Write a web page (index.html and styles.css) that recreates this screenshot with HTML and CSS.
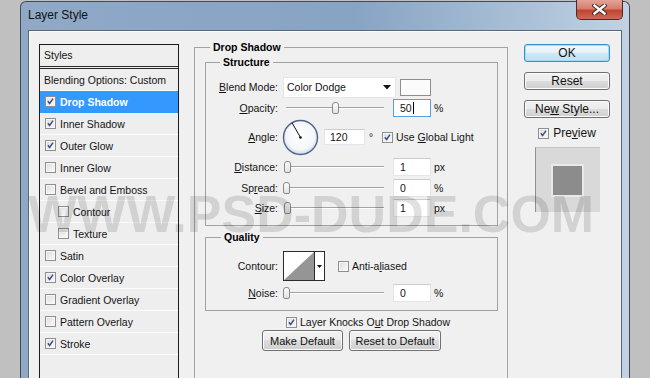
FILE: index.html
```html
<!DOCTYPE html>
<html lang="en">
<head>
    <meta charset="UTF-8">
    <title>Layer Style</title>
    <link rel="stylesheet" href="styles.css">
</head>
<body>
    <div class="window">
        <div class="titlebar">
            <span class="title">Layer Style</span>
            <span class="close">
                <svg width="15" height="11" viewBox="0 0 15 11">
                    <path d="M2.5 1.5 L12.5 9.5 M12.5 1.5 L2.5 9.5" stroke="#3a2020" stroke-width="4.2" stroke-linecap="square"/>
                    <path d="M2.5 1.5 L12.5 9.5 M12.5 1.5 L2.5 9.5" stroke="#fff" stroke-width="2.4" stroke-linecap="square"/>
                </svg>
            </span>
        </div>
        <div class="client">
            <div class="styles-list">
                <div class="list-head">Styles</div>
                <div class="list-row blending">Blending Options: Custom</div>
                <div class="list-row selected"><span class="check"><svg viewBox="0 0 11 11"><path d="M2.3 5.2 L4.4 7.9 L8.6 1.9"/></svg></span>Drop Shadow</div>
                <div class="list-row"><span class="check"><svg viewBox="0 0 11 11"><path d="M2.3 5.2 L4.4 7.9 L8.6 1.9"/></svg></span>Inner Shadow</div>
                <div class="list-row"><span class="check"><svg viewBox="0 0 11 11"><path d="M2.3 5.2 L4.4 7.9 L8.6 1.9"/></svg></span>Outer Glow</div>
                <div class="list-row"><span class="check"></span>Inner Glow</div>
                <div class="list-row"><span class="check"></span>Bevel and Emboss</div>
                <div class="list-row sub"><span class="check"></span>Contour</div>
                <div class="list-row sub"><span class="check"></span>Texture</div>
                <div class="list-row"><span class="check"></span>Satin</div>
                <div class="list-row"><span class="check"><svg viewBox="0 0 11 11"><path d="M2.3 5.2 L4.4 7.9 L8.6 1.9"/></svg></span>Color Overlay</div>
                <div class="list-row"><span class="check"></span>Gradient Overlay</div>
                <div class="list-row"><span class="check"></span>Pattern Overlay</div>
                <div class="list-row"><span class="check"><svg viewBox="0 0 11 11"><path d="M2.3 5.2 L4.4 7.9 L8.6 1.9"/></svg></span>Stroke</div>
            </div>

            <div class="settings">
                <fieldset class="group outer">
                    <legend>Drop Shadow</legend>

                    <fieldset class="group structure">
                        <legend>Structure</legend>
                        <div class="row row-blend">
                            <span class="row-label"><u>B</u>lend Mode:</span>
                            <div class="select">
                                <span>Color Dodge</span>
                                <svg width="8" height="5" viewBox="0 0 8 5"><path d="M0 0 H8 L4 4.5 Z" fill="#111"/></svg>
                            </div>
                            <span class="swatch"></span>
                        </div>
                        <div class="row row-opacity">
                            <span class="row-label"><u>O</u>pacity:</span>
                            <div class="slider"><span class="thumb" style="left: 50%"></span></div>
                            <span class="field focused">50<span class="caret"></span></span>
                            <span class="unit">%</span>
                        </div>
                        <div class="row row-angle">
                            <span class="row-label"><u>A</u>ngle:</span>
                            <svg class="dial" width="37" height="37" viewBox="0 0 37 37">
                                <defs>
                                    <radialGradient id="dialFill" cx="50%" cy="45%" r="55%">
                                        <stop offset="0%" stop-color="#ffffff"/>
                                        <stop offset="75%" stop-color="#f4f6fa"/>
                                        <stop offset="100%" stop-color="#cdd6e4"/>
                                    </radialGradient>
                                </defs>
                                <circle cx="18.5" cy="18.5" r="17" fill="url(#dialFill)" stroke="#4f6387" stroke-width="1.4"/>
                                <line x1="18.5" y1="18.5" x2="10" y2="3.8" stroke="#111" stroke-width="1"/>
                                <circle cx="18.5" cy="18.5" r="1.3" fill="#111"/>
                            </svg>
                            <span class="field angle-field">120</span>
                            <span class="degree">°</span>
                            <span class="check"><svg viewBox="0 0 11 11"><path d="M2.3 5.2 L4.4 7.9 L8.6 1.9"/></svg></span>
                            <span class="check-text">Use <u>G</u>lobal Light</span>
                        </div>
                        <div class="row row-distance">
                            <span class="row-label"><u>D</u>istance:</span>
                            <div class="slider"><span class="thumb" style="left: 1%"></span></div>
                            <span class="field">1</span>
                            <span class="unit">px</span>
                        </div>
                        <div class="row row-spread">
                            <span class="row-label">Sp<u>r</u>ead:</span>
                            <div class="slider"><span class="thumb" style="left: 0%"></span></div>
                            <span class="field">0</span>
                            <span class="unit">%</span>
                        </div>
                        <div class="row row-size">
                            <span class="row-label"><u>S</u>ize:</span>
                            <div class="slider"><span class="thumb" style="left: 1%"></span></div>
                            <span class="field">1</span>
                            <span class="unit">px</span>
                        </div>
                    </fieldset>

                    <fieldset class="group quality">
                        <legend>Quality</legend>
                        <div class="row row-contour">
                            <span class="row-label">Contour:</span>
                            <div class="contour">
                                <svg class="contour-curve" width="30" height="28" viewBox="0 0 30 28">
                                    <rect width="30" height="28" fill="#fff"/>
                                    <path d="M0 28 L30 0 V28 Z" fill="#959595"/>
                                </svg>
                                <span class="contour-arrow">
                                    <svg width="5" height="3" viewBox="0 0 5 3"><path d="M0 0 H5 L2.5 3 Z" fill="#111"/></svg>
                                </span>
                            </div>
                            <span class="check aa-check"></span>
                            <span class="check-text">Anti-a<u>l</u>iased</span>
                        </div>
                        <div class="row row-noise">
                            <span class="row-label"><u>N</u>oise:</span>
                            <div class="slider"><span class="thumb" style="left: 0%"></span></div>
                            <span class="field">0</span>
                            <span class="unit">%</span>
                        </div>
                    </fieldset>

                    <div class="knockout">
                        <span class="check"><svg viewBox="0 0 11 11"><path d="M2.3 5.2 L4.4 7.9 L8.6 1.9"/></svg></span>
                        <span class="check-text">Layer Knocks O<u>u</u>t Drop Shadow</span>
                    </div>

                    <div class="defaults">
                        <button class="btn make-default">Make Default</button>
                        <button class="btn reset-default">Reset to Default</button>
                    </div>
                </fieldset>
            </div>

            <div class="actions">
                <button class="btn side default">OK</button>
                <button class="btn side">Reset</button>
                <button class="btn side">Ne<u>w</u> Style...</button>
                <div class="preview-toggle">
                    <span class="check"><svg viewBox="0 0 11 11"><path d="M2.3 5.2 L4.4 7.9 L8.6 1.9"/></svg></span>
                    <span class="preview-text">Pre<u>v</u>iew</span>
                </div>
                <div class="preview-box">
                    <div class="preview-swatch"></div>
                </div>
            </div>
        </div>
    </div>
    <div class="watermark">WWW.PSD-DUDE.COM</div>
</body>
</html>
```

FILE: styles.css
```css
/* PAGE */
body {
    margin: 0;
    width: 650px;
    height: 378px;
    overflow: hidden;
    position: relative;
    background-color: #c0c0c0;
    font-family: "Liberation Sans", Arial, sans-serif;
    font-size: 10.5px;
    color: #141414;
}

u {
    text-decoration-thickness: 1px;
    text-underline-offset: 1px;
}

/* Window frame */
.window {
    margin: 1px 0 0 20px;
    width: 610px;
    height: 420px;
    box-sizing: border-box;
    border: 1px solid #3f4b59;
    border-bottom: none;
    border-radius: 6px 6px 0 0;
    padding: 0 7px;
    background: linear-gradient(90deg, #8fa9c7 0%, #88a4c3 55%, #a6bdd5 80%, #c2d2e3 100%);
    display: flex;
    flex-direction: column;
}

.titlebar {
    flex: none;
    height: 28px;
    display: flex;
    align-items: flex-start;
}
.title {
    margin-top: 6px;
    font-size: 12px;
    line-height: 14px;
    color: #111;
}
.close {
    margin: -2px -1px 0 auto;
    width: 47px;
    height: 20px;
    box-sizing: border-box;
    border: 1px solid #4a2a28;
    border-top: none;
    border-radius: 0 0 5px 5px;
    background: linear-gradient(#e4a396 0%, #d67e6c 45%, #c2432f 55%, #cf6a56 100%);
    display: flex;
    align-items: center;
    justify-content: center;
}

/* Client area */
.client {
    flex: 1;
    display: flex;
    align-items: flex-start;
    padding: 13px 10px 0 10px;
    background-color: #f0f0f0;
    border: 1px solid #5b6878;
    border-bottom: none;
    box-shadow: inset 1px 1px 0 #fafafa;
}

/* Styles list */
.styles-list {
    width: 140px;
    height: 360px;
    box-sizing: border-box;
    margin-right: 15px;
    border: 1px solid #1c1c1c;
    background-color: #eeeeee;
}
.list-head {
    height: 21px;
    line-height: 21px;
    padding-left: 4px;
    border-bottom: 3px double #2a2a2a;
}
.list-row {
    height: 21px;
    display: flex;
    align-items: center;
    padding-left: 5px;
    border-bottom: 1px solid #fbfbfb;
}
.list-row.blending {
    padding-left: 4px;
}
.list-row.sub {
    padding-left: 18px;
}
.list-row .check {
    margin-right: 4px;
}
.list-row.selected {
    background-color: #3399ff;
    border-bottom-color: #3399ff;
    color: #fff;
    font-weight: bold;
}

/* Checkbox */
.check {
    width: 11px;
    height: 11px;
    flex: none;
    box-sizing: border-box;
    border: 1px solid #8e8f8f;
    background: linear-gradient(135deg, #dcdcdc, #fcfcfc);
    box-shadow: inset 0 0 0 1px #f6f6f6;
    display: flex;
}
.check svg {
    width: 9px;
    height: 9px;
}
.check path {
    fill: none;
    stroke: #3b4d88;
    stroke-width: 1.8;
}

/* Settings column */
.settings {
    width: 314px;
    flex: none;
}

.group {
    margin: 0;
    padding: 0;
    border: 1px solid #a2a2a2;
    min-inline-size: 0;
}
.group legend {
    padding: 0 3px;
    line-height: 12px;
    font-weight: bold;
    color: #000;
}

.group.outer {
    margin-top: -3px;
    height: 340px;
    box-sizing: border-box;
    border-bottom: none;
    padding: 3px 9px 0 10px;
}
.group.outer > legend {
    margin-left: 5px;
}

.group.structure {
    padding: 8px 0 7px 0;
}
.group.structure > legend {
    margin-left: 14px;
}
.group.quality {
    margin-top: 5px;
    padding: 8px 0 7px 0;
}
.group.quality > legend {
    margin-left: 15px;
}

/* Rows */
.row {
    display: flex;
    align-items: center;
}
.row-blend { height: 22px; }
.row-opacity { height: 19px; }
.row-angle { height: 40px; }
.row-distance { height: 20px; }
.row-spread { height: 21px; }
.row-size { height: 20px; }
.row-contour { height: 30px; }
.row-noise { height: 20px; margin-top: 2px; }

.row-label {
    width: 72px;
    flex: none;
    margin-right: 5px;
    text-align: right;
}

.select {
    width: 113px;
    height: 21px;
    box-sizing: border-box;
    border: 1px solid #e6e6e6;
    background-color: #fff;
    display: flex;
    align-items: center;
    justify-content: space-between;
    padding: 0 4px 0 3px;
}
.swatch {
    margin-left: 4px;
    width: 31px;
    height: 17px;
    box-sizing: border-box;
    border: 1px solid #8d8d8d;
    background-color: #fbfbfb;
}

/* Slider */
.slider {
    position: relative;
    width: 98px;
    height: 14px;
    margin: 0 9px 0 3px;
}
.slider::before {
    content: "";
    position: absolute;
    left: 0;
    right: 0;
    top: 6px;
    height: 1px;
    background-color: #a3a3a3;
    border-bottom: 1px solid #ffffff;
}
.thumb {
    position: absolute;
    top: 1px;
    width: 7px;
    height: 12px;
    margin-left: -3px;
    box-sizing: border-box;
    border: 1px solid #8a8a8a;
    border-radius: 3px 3px 2px 2px;
    background: linear-gradient(#fdfdfd, #e2e2e2);
}

/* Text fields */
.field {
    width: 38px;
    height: 18px;
    box-sizing: border-box;
    border: 1px solid #e2e5ea;
    border-top-color: #c9ccd2;
    background-color: #fff;
    padding-left: 6px;
    display: flex;
    align-items: center;
}
.field.focused {
    border-color: #5b9fe0;
}
.caret {
    width: 1px;
    height: 12px;
    margin-left: 1px;
    background-color: #000;
}
.unit {
    margin-left: 3px;
}

.dial {
    margin-left: -1px;
    flex: none;
}
.angle-field {
    width: 41px;
    height: 16px;
    margin-left: 5px;
    padding-left: 5px;
}
.degree {
    margin-left: 4px;
    margin-right: 9px;
    font-size: 10px;
}
.check-text {
    margin-left: 3px;
}

/* Contour picker */
.contour {
    width: 42px;
    height: 30px;
    box-sizing: border-box;
    border: 1px solid #2b2b2b;
    background-color: #fff;
    display: flex;
}
.contour-curve {
    flex: none;
    border-right: 1px solid #2b2b2b;
}
.contour-arrow {
    flex: 1;
    display: flex;
    align-items: center;
    justify-content: center;
}
.aa-check {
    margin-left: 13px;
}

/* Knockout and default buttons */
.knockout {
    margin: 5px 0 0 81px;
    height: 12px;
    display: flex;
    align-items: center;
}
.defaults {
    margin-top: 2px;
    display: flex;
    justify-content: center;
    gap: 6px;
}

/* Buttons */
.btn {
    height: 21px;
    padding: 0;
    box-sizing: border-box;
    border: 1px solid #707070;
    border-radius: 3px;
    background: linear-gradient(#f2f2f2 0%, #ebebeb 50%, #dddddd 50%, #cfcfcf 100%);
    box-shadow: inset 0 0 0 1px #fbfbfb;
    font-family: "Liberation Sans", Arial, sans-serif;
    font-size: 11px;
    color: #111;
}
.make-default { width: 81px; }
.reset-default { width: 92px; }

.actions {
    width: 86px;
    flex: none;
    margin-left: 16px;
    display: flex;
    flex-direction: column;
}
.btn.side {
    width: 86px;
    height: 18px;
    margin-bottom: 10px;
    font-size: 12px;
}
.btn.default {
    border-color: #3c8fc4;
    box-shadow: inset 0 0 0 1px #9fdcf6;
    background: linear-gradient(#f2f9fd 0%, #e2f1fb 50%, #cfe8f8 50%, #bfe0f5 100%);
}

.preview-toggle {
    margin-top: -1px;
    height: 12px;
    display: flex;
    align-items: center;
    justify-content: center;
    font-size: 12px;
}
.preview-text {
    margin-left: 4px;
}
.preview-box {
    margin: 8px auto 0;
    width: 65px;
    height: 65px;
    box-sizing: border-box;
    border-left: 1px solid #8f8f8f;
    border-top: 1px solid #c4c4c4;
    background-color: #d9d9d9;
    display: flex;
    align-items: center;
    justify-content: center;
}
.preview-swatch {
    width: 33px;
    height: 33px;
    box-sizing: border-box;
    border: 2px solid #e9e9e9;
    background-color: #8c8c8c;
}

/* Watermark over the screenshot */
.watermark {
    position: absolute;
    left: 28px;
    top: 188px;
    font-size: 52px;
    line-height: 52px;
    font-weight: bold;
    color: rgba(0, 0, 0, 0.12);
    white-space: nowrap;
    pointer-events: none;
}
```
